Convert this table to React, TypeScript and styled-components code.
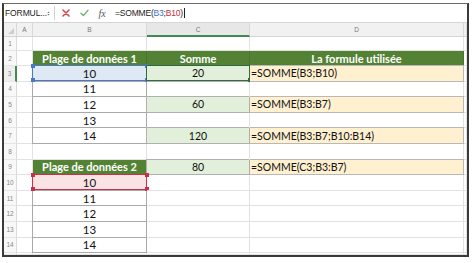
import React from "react";
import styled, { createGlobalStyle, css } from "styled-components";

const Global = createGlobalStyle`
  html, body { margin: 0; padding: 0; background: #ffffff; }
  body { width: 474px; height: 263px; overflow: hidden; }
`;

const Frame = styled.div`
  box-sizing: border-box;
  width: 467px;
  height: 254px;
  margin: 3px 0 0 2px;
  border: 2px solid #3a3a3a;
  border-top: 1px solid #6a6a6a;
  display: flex;
  flex-direction: column;
  background: #fff;
  overflow: hidden;
`;

const FormulaBar = styled.div`
  height: 18px;
  flex: 0 0 18px;
  display: flex;
  align-items: center;
  border-bottom: 1px solid #d6d6d6;
  font-family: "Liberation Sans", Arial, sans-serif;
  font-size: 8.5px;
  color: #222;
  background: #fff;
`;

const NameBox = styled.div`
  width: 50px;
  display: flex;
  align-items: center;
  justify-content: space-between;
  padding: 0 4px 0 1px;
  box-sizing: border-box;
  letter-spacing: -0.1px;
`;

const Divider = styled.div`
  width: 1px;
  height: 14px;
  background: #d0d0d0;
`;

const IconSlot = styled.div<{ $w: number }>`
  width: ${(p) => p.$w}px;
  display: flex;
  align-items: center;
  justify-content: center;
`;

const Fx = styled.span`
  font-family: "Liberation Serif", "Times New Roman", serif;
  font-style: italic;
  font-size: 10px;
  color: #555;
`;

const FormulaText = styled.div`
  margin-left: 2px;
  display: flex;
  align-items: center;
  font-size: 8.5px;
  letter-spacing: -0.2px;
`;

const Ref = styled.span<{ $c: string }>`
  color: ${(p) => p.$c};
`;

const Caret = styled.span`
  display: inline-block;
  width: 1px;
  height: 10px;
  background: #222;
  margin-left: 1px;
`;

const Sheet = styled.div`
  flex: 1;
  display: grid;
  grid-template-columns: 13px 16px 114px 103px 214px 1fr;
  grid-template-rows: 14px 14px 15px repeat(12, 15.6px) 1fr;
  font-family: "Lato", "Open Sans", sans-serif;
`;

const ColHead = styled.div<{ $active?: boolean }>`
  box-sizing: border-box;
  background: ${(p) => (p.$active ? "#e7e7e7" : "#f1f1f1")};
  border-right: 1px solid #d9d9d9;
  border-bottom: ${(p) => (p.$active ? "2px solid #3f8a52" : "1px solid #d4d4d4")};
  display: flex;
  align-items: center;
  justify-content: center;
  font-family: "Liberation Sans", Arial, sans-serif;
  font-size: 6.5px;
  color: #777;
`;

const Corner = styled.div`
  box-sizing: border-box;
  background: #f1f1f1;
  border-right: 1px solid #d9d9d9;
  border-bottom: 1px solid #d4d4d4;
  display: flex;
  align-items: flex-end;
  justify-content: flex-end;
  padding: 0 2px 2px 0;
`;

const RowHead = styled.div<{ $active?: boolean }>`
  box-sizing: border-box;
  background: ${(p) => (p.$active ? "#eeeeee" : "#f8f8f8")};
  border-right: ${(p) => (p.$active ? "2px solid #3f8a52" : "1px solid #dadada")};
  border-bottom: 1px solid #e6e6e6;
  display: flex;
  align-items: center;
  justify-content: center;
  font-family: "Liberation Sans", Arial, sans-serif;
  font-size: 6.5px;
  color: #888;
`;

type Variant = "plain" | "head" | "table" | "green" | "orange";

const Cell = styled.div<{ $v: Variant; $align?: "center" | "left"; $sel?: string }>`
  position: relative;
  box-sizing: border-box;
  display: flex;
  align-items: center;
  justify-content: ${(p) => (p.$align === "left" ? "flex-start" : "center")};
  padding: ${(p) => (p.$align === "left" ? "0 0 0 1px" : "0")};
  border-right: 1px solid #e2e2e2;
  border-bottom: 1px solid #e2e2e2;
  font-size: 11.5px;
  color: #111;
  white-space: nowrap;
  ${(p) =>
    p.$v === "head" &&
    css`
      background: #548235;
      color: #fff;
      font-weight: 700;
      font-size: 11px;
      border-right: 1px solid #4a7530;
      border-bottom: 1px solid #4a7530;
    `}
  ${(p) =>
    p.$v === "table" &&
    css`
      border-right: 1px solid #a9a9a9;
      border-bottom: 1px solid #a9a9a9;
      box-shadow: -1px 0 0 #a9a9a9;
    `}
  ${(p) =>
    p.$v === "green" &&
    css`
      background: #e2efda;
      font-size: 10.5px;
      border-right: 1px solid #b0b0b0;
      border-bottom: 1px solid #b0b0b0;
      box-shadow: -1px -1px 0 #b0b0b0;
    `}
  ${(p) =>
    p.$v === "orange" &&
    css`
      background: #fff0cf;
      font-size: 10.5px;
      border-right: 1px solid #b8b8b8;
      border-bottom: 1px solid #b8b8b8;
      box-shadow: 0 -1px 0 #b8b8b8;
    `}
  ${(p) =>
    p.$sel === "blue" &&
    css`
      background: #dfe8f5;
    `}
  ${(p) =>
    p.$sel === "red" &&
    css`
      background: #f9e3e4;
    `}
`;

const SelBox = styled.div<{ $c: string; $w: number }>`
  position: absolute;
  inset: -1px -1px 0 -1px;
  border: ${(p) => p.$w}px solid ${(p) => p.$c};
  pointer-events: none;
`;

const Handle = styled.span<{ $c: string; $pos: string }>`
  position: absolute;
  width: 4px;
  height: 4px;
  background: ${(p) => p.$c};
  ${(p) => (p.$pos.includes("t") ? "top: -2.5px;" : "bottom: -2.5px;")}
  ${(p) => (p.$pos.includes("l") ? "left: -2.5px;" : "right: -2.5px;")}
`;

type CellDef = { text?: string; v: Variant; align?: "center" | "left"; sel?: "blue" | "red" | "active" };

const rows: { n: number; b: CellDef; c: CellDef; d: CellDef; active?: boolean }[] = [
  { n: 1, b: { v: "plain" }, c: { v: "plain" }, d: { v: "plain" } },
  { n: 2, b: { text: "Plage de données 1", v: "head" }, c: { text: "Somme", v: "head" }, d: { text: "La formule utilisée", v: "head" } },
  { n: 3, active: true, b: { text: "10", v: "table", sel: "blue" }, c: { text: "20", v: "green", sel: "active" }, d: { text: "=SOMME(B3;B10)", v: "orange", align: "left" } },
  { n: 4, b: { text: "11", v: "table" }, c: { v: "plain" }, d: { v: "plain" } },
  { n: 5, b: { text: "12", v: "table" }, c: { text: "60", v: "green" }, d: { text: "=SOMME(B3:B7)", v: "orange", align: "left" } },
  { n: 6, b: { text: "13", v: "table" }, c: { v: "plain" }, d: { v: "plain" } },
  { n: 7, b: { text: "14", v: "table" }, c: { text: "120", v: "green" }, d: { text: "=SOMME(B3:B7;B10:B14)", v: "orange", align: "left" } },
  { n: 8, b: { v: "plain" }, c: { v: "plain" }, d: { v: "plain" } },
  { n: 9, b: { text: "Plage de données 2", v: "head" }, c: { text: "80", v: "green" }, d: { text: "=SOMME(C3;B3:B7)", v: "orange", align: "left" } },
  { n: 10, b: { text: "10", v: "table", sel: "red" }, c: { v: "plain" }, d: { v: "plain" } },
  { n: 11, b: { text: "11", v: "table" }, c: { v: "plain" }, d: { v: "plain" } },
  { n: 12, b: { text: "12", v: "table" }, c: { v: "plain" }, d: { v: "plain" } },
  { n: 13, b: { text: "13", v: "table" }, c: { v: "plain" }, d: { v: "plain" } },
  { n: 14, b: { text: "14", v: "table" }, c: { v: "plain" }, d: { v: "plain" } },
];

const selColors: Record<string, string> = { blue: "#4a78c6", red: "#c9304a", active: "#2f6b3f" };

function SheetCell({ def }: { def: CellDef }) {
  const c = def.sel ? selColors[def.sel] : "";
  return (
    <Cell $v={def.v} $align={def.align} $sel={def.sel}>
      {def.text}
      {def.sel && (
        <SelBox $c={c} $w={def.sel === "active" ? 1.5 : 1.2}>
          {def.sel === "active" ? (
            <Handle $c={c} $pos="br" />
          ) : (
            <>
              <Handle $c={c} $pos="tl" />
              <Handle $c={c} $pos="tr" />
              <Handle $c={c} $pos="bl" />
              <Handle $c={c} $pos="br" />
            </>
          )}
        </SelBox>
      )}
    </Cell>
  );
}

export default function App() {
  return (
    <>
      <Global />
      <Frame>
        <FormulaBar>
          <NameBox>
            <span>FORMUL...</span>
            <svg width="5" height="9" viewBox="0 0 5 9">
              <path d="M0.5 3.5 L2.5 1 L4.5 3.5 Z" fill="#777" />
              <path d="M0.5 5.5 L2.5 8 L4.5 5.5 Z" fill="#777" />
            </svg>
          </NameBox>
          <Divider />
          <IconSlot $w={22}>
            <svg width="8" height="8" viewBox="0 0 8 8">
              <path d="M1 1 L7 7 M7 1 L1 7" stroke="#d9404a" strokeWidth="1.5" strokeLinecap="round" />
            </svg>
          </IconSlot>
          <IconSlot $w={14}>
            <svg width="9" height="8" viewBox="0 0 9 8">
              <path d="M1 4.2 L3.4 6.6 L8 1.2" stroke="#6fb56f" strokeWidth="1.4" fill="none" strokeLinecap="round" strokeLinejoin="round" />
            </svg>
          </IconSlot>
          <IconSlot $w={22}>
            <Fx>fx</Fx>
          </IconSlot>
          <FormulaText>
            <span>=SOMME(</span>
            <Ref $c="#3d6fc4">B3</Ref>
            <span>;</span>
            <Ref $c="#c43040">B10</Ref>
            <span>)</span>
            <Caret />
          </FormulaText>
        </FormulaBar>
        <Sheet>
          <Corner>
            <svg width="6" height="6" viewBox="0 0 6 6">
              <path d="M6 0 L6 6 L0 6 Z" fill="#cfcfcf" />
            </svg>
          </Corner>
          <ColHead>A</ColHead>
          <ColHead>B</ColHead>
          <ColHead $active>C</ColHead>
          <ColHead>D</ColHead>
          <ColHead />
          {rows.map((r) => (
            <React.Fragment key={r.n}>
              <RowHead $active={r.active}>{r.n}</RowHead>
              <Cell $v="plain" />
              <SheetCell def={r.b} />
              <SheetCell def={r.c} />
              <SheetCell def={r.d} />
              <Cell $v="plain" />
            </React.Fragment>
          ))}
          <RowHead />
          <Cell $v="plain" />
          <Cell $v="plain" />
          <Cell $v="plain" />
          <Cell $v="plain" />
          <Cell $v="plain" />
        </Sheet>
      </Frame>
    </>
  );
}
